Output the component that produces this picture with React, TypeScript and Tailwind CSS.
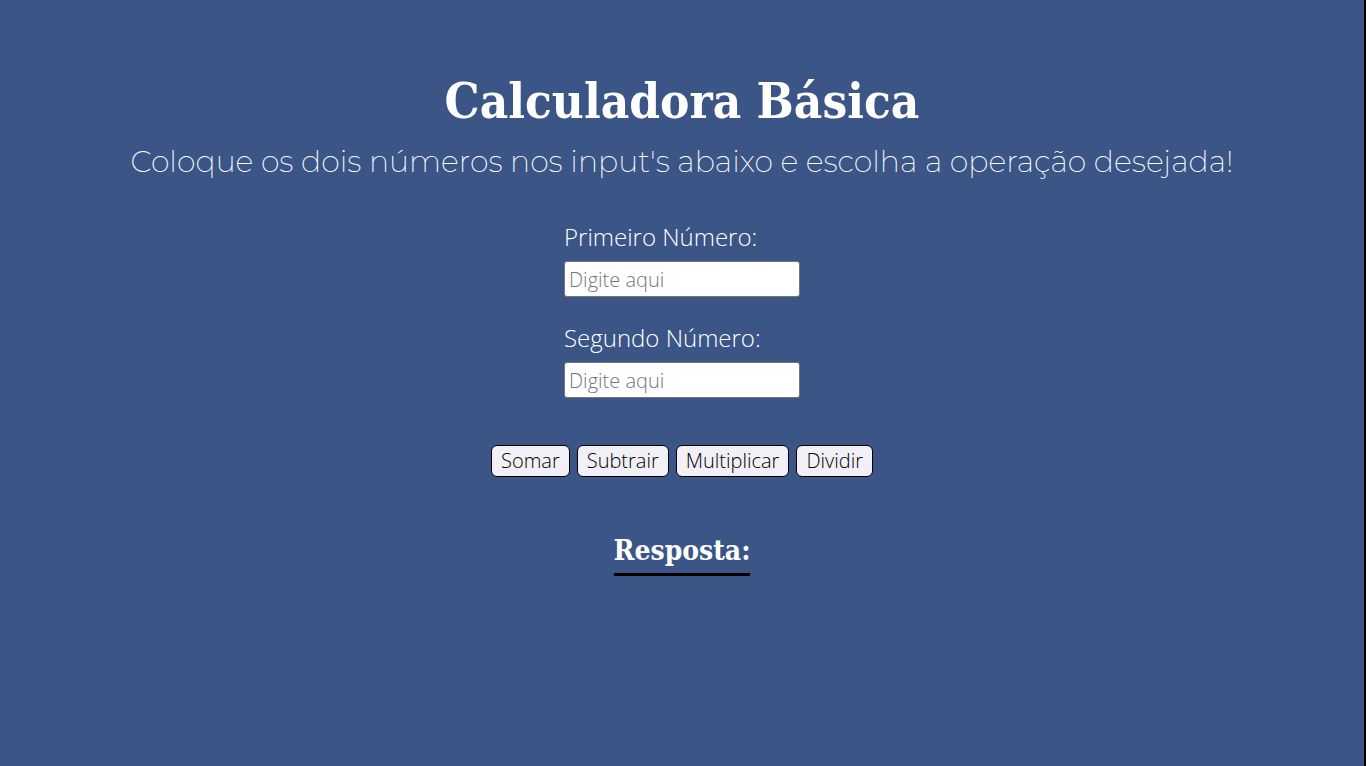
import { useState } from "react";

const operations: { label: string; apply: (a: number, b: number) => number }[] = [
  { label: "Somar", apply: (a, b) => a + b },
  { label: "Subtrair", apply: (a, b) => a - b },
  { label: "Multiplicar", apply: (a, b) => a * b },
  { label: "Dividir", apply: (a, b) => a / b },
];

function NumberField({ id, label, value, onChange }: { id: string; label: string; value: string; onChange: (v: string) => void }) {
  return (
    <div className="flex flex-col gap-2">
      <label htmlFor={id} className="text-2xl font-light">
        {label}
      </label>
      <input
        id={id}
        type="text"
        inputMode="decimal"
        placeholder="Digite aqui"
        value={value}
        onChange={(e) => onChange(e.target.value)}
        className="h-9 w-59 rounded-[3px] border border-[#767676] bg-white px-1 text-xl font-light text-black placeholder:text-[#757575]"
      />
    </div>
  );
}

export default function App() {
  const [first, setFirst] = useState("");
  const [second, setSecond] = useState("");
  const [answer, setAnswer] = useState("");

  return (
    <main className="flex min-h-screen flex-col items-center border-r-2 border-black bg-[#3b5586] pt-17 font-['Open_Sans',sans-serif] text-white">
      <h1 className="text-center font-['Roboto_Slab','DejaVu_Serif_Condensed','DejaVu_Serif',serif] text-[49px] leading-[66px] font-bold">Calculadora Básica</h1>
      <p className="mt-2 text-center font-['Montserrat','Open_Sans',sans-serif] text-[30px] leading-10 font-extralight">
        Coloque os dois números nos input's abaixo e escolha a operação desejada!
      </p>
      <div className="mt-[39px] flex flex-col gap-[25px]">
        <NumberField id="first" label="Primeiro Número:" value={first} onChange={setFirst} />
        <NumberField id="second" label="Segundo Número:" value={second} onChange={setSecond} />
      </div>
      <div className="mt-[47px] flex gap-[7px]">
        {operations.map(({ label, apply }) => (
          <button
            key={label}
            type="button"
            onClick={() => setAnswer(String(apply(Number(first), Number(second))))}
            className="h-8 rounded-md border border-black bg-[#f1f0f6] px-[9px] text-xl leading-7 font-light text-black"
          >
            {label}
          </button>
        ))}
      </div>
      <h2 className="mt-14 border-b-3 border-black pb-1 font-['Roboto_Slab','DejaVu_Serif_Condensed','DejaVu_Serif',serif] text-[28px] leading-9 font-bold">
        Resposta:
      </h2>
      <output className="mt-4 text-2xl">{answer}</output>
    </main>
  );
}
